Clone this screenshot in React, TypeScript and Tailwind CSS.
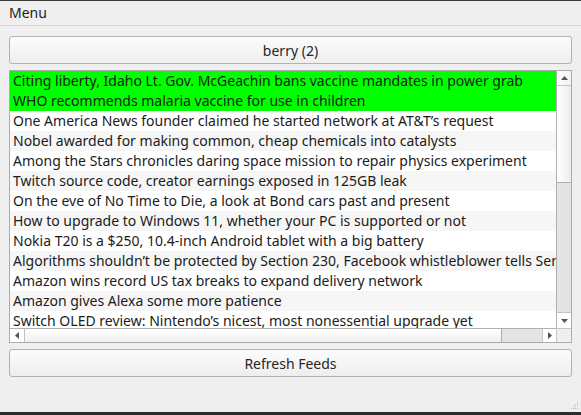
import React from 'react';

const headlines = [
  'Citing liberty, Idaho Lt. Gov. McGeachin bans vaccine mandates in power grab',
  'WHO recommends malaria vaccine for use in children',
  'One America News founder claimed he started network at AT&T’s request',
  'Nobel awarded for making common, cheap chemicals into catalysts',
  'Among the Stars chronicles daring space mission to repair physics experiment',
  'Twitch source code, creator earnings exposed in 125GB leak',
  'On the eve of No Time to Die, a look at Bond cars past and present',
  'How to upgrade to Windows 11, whether your PC is supported or not',
  'Nokia T20 is a $250, 10.4-inch Android tablet with a big battery',
  'Algorithms shouldn’t be protected by Section 230, Facebook whistleblower tells Senate',
  'Amazon wins record US tax breaks to expand delivery network',
  'Amazon gives Alexa some more patience',
  'Switch OLED review: Nintendo’s nicest, most nonessential upgrade yet',
];

const unread = 2;

function QtButton({ label }: { label: string }) {
  return (
    <button className="h-[28px] w-full rounded-[3px] border border-[#b2b2b2] bg-gradient-to-b from-[#fcfcfc] to-[#eeeeee] text-[14px] text-[#262626]">
      {label}
    </button>
  );
}

function Arrow({ dir }: { dir: 'up' | 'down' | 'left' | 'right' }) {
  const pts = {
    up: '1,6 4.5,2 8,6',
    down: '1,3 4.5,7 8,3',
    left: '6,1 2,4.5 6,8',
    right: '3,1 7,4.5 3,8',
  }[dir];
  return (
    <svg width="9" height="9" viewBox="0 0 9 9">
      <polygon points={pts} fill="#545454" />
    </svg>
  );
}

function FeedRow({ text, index }: { text: string; index: number }) {
  const highlighted = index < unread;
  const alt = index % 2 === 1;
  return (
    <div
      className={`h-[20px] shrink-0 pl-[3px] leading-[20px] ${
        highlighted ? 'bg-[#00ff00]' : alt ? 'bg-[#f6f6f6]' : 'bg-white'
      }`}
    >
      {text}
    </div>
  );
}

function FeedList() {
  return (
    <div className="grid h-[273px] grid-cols-[1fr_15px] grid-rows-[1fr_14px] border border-[#ababab] bg-white">
      <div className="flex flex-col overflow-hidden whitespace-nowrap text-[14px] text-[#1b1b1b]">
        {headlines.map((h, i) => (
          <FeedRow key={i} text={h} index={i} />
        ))}
      </div>

      {/* vertical scrollbar */}
      <div className="flex flex-col border-l border-[#b0b0b0] bg-[#e4e4e4]">
        <div className="flex h-[15px] items-center justify-center border-b border-[#c4c4c4] bg-gradient-to-r from-white to-[#f2f2f2]">
          <Arrow dir="up" />
        </div>
        <div className="h-[97px] border-b border-[#adadad] bg-gradient-to-r from-white to-[#ececec]" />
        <div className="flex-1" />
        <div className="flex h-[16px] items-center justify-center border-t border-[#c4c4c4] bg-white">
          <Arrow dir="down" />
        </div>
      </div>

      {/* horizontal scrollbar */}
      <div className="flex border-t border-[#b0b0b0] bg-[#e4e4e4]">
        <div className="flex w-[15px] items-center justify-center border-r border-[#c4c4c4] bg-white">
          <Arrow dir="left" />
        </div>
        <div className="w-[477px] border-r border-[#adadad] bg-gradient-to-b from-white to-[#f0f0f0]" />
        <div className="flex-1" />
        <div className="flex w-[14px] items-center justify-center border-l border-[#c4c4c4] bg-white">
          <Arrow dir="right" />
        </div>
      </div>
      <div className="border-l border-t border-[#c4c4c4] bg-[#efefef]" />
    </div>
  );
}

export default function App() {
  return (
    <div
      className="flex h-[415px] w-[581px] flex-col border-t border-[#3a3a3a] bg-[#efefef] text-[#1e1e1e]"
      style={{ fontFamily: '"Noto Sans", "DejaVu Sans", sans-serif' }}
    >
      <div className="h-[25px] border-b border-[#d6d6d6] pl-[9px] text-[14px] leading-[24px]">Menu</div>

      <div className="flex flex-1 flex-col gap-[6px] px-[9px] pt-[10px]">
        <QtButton label={`berry (${unread})`} />
        <FeedList />
        <QtButton label="Refresh Feeds" />
      </div>

      <div className="relative h-[3px] bg-[#2d2d2d]">
        <svg className="absolute bottom-[5px] right-[2px]" width="10" height="10" viewBox="0 0 10 10">
          {[
            [8, 2],
            [6, 4],
            [8, 4],
            [4, 6],
            [6, 6],
            [8, 6],
            [2, 8],
            [4, 8],
            [6, 8],
            [8, 8],
          ].map(([x, y], i) => (
            <rect key={i} x={x} y={y} width="1" height="1" fill="#b8b8b8" />
          ))}
        </svg>
      </div>
    </div>
  );
}
